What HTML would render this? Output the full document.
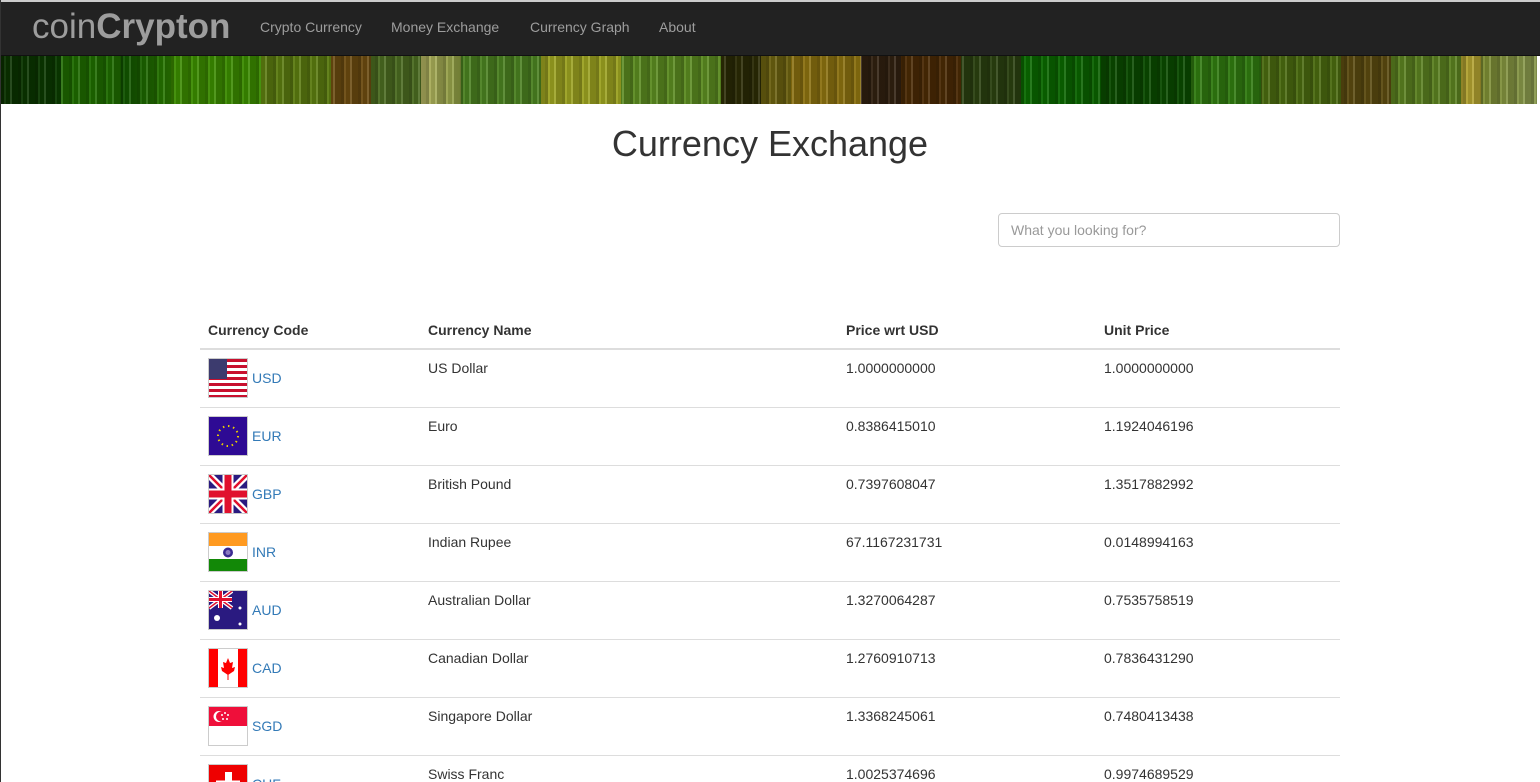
<!DOCTYPE html>
<html><head><meta charset="utf-8"><style>
*{box-sizing:border-box}
html,body{margin:0;width:1540px;height:782px;overflow:hidden}
body{position:relative;background:#fff;font-family:"Liberation Sans",sans-serif;font-size:14px;color:#333}
.lb{position:absolute;left:0;top:0;width:1px;height:782px;background:#333}
.nav{position:absolute;left:0;top:0;width:1540px;height:56px;background:#222;border-top:2px solid #ccc;border-bottom:1px solid #111}
.brand{position:absolute;left:32px;top:5px;font-size:35px;color:#9d9d9d}
.brand b{font-weight:bold}
.nav a{position:absolute;top:17px;color:#9d9d9d;font-size:14px;text-decoration:none}
.banner{position:absolute;left:1px;top:56px;width:1536px;height:48px;background:linear-gradient(90deg,#0a3000 0,#0a3a00 60px,#1e6a00 60px,#1e6a00 120px,#0f5000 120px,#2a7a00 170px,#3a8a00 170px,#3a8a00 260px,#5a7a10 260px,#5a7a10 330px,#6a4a10 330px,#6a4a10 370px,#4a6a20 370px,#4a6a20 420px,#b0b060 420px,#8a9a40 460px,#4a8020 460px,#4a8020 540px,#9aa020 540px,#9aa020 620px,#5a8a20 620px,#5a8a20 720px,#2a2a05 720px,#2a2a05 760px,#6a6010 760px,#6a6010 790px,#8a7010 790px,#8a7010 860px,#302010 860px,#302010 900px,#4a2a05 900px,#4a2a05 960px,#2a4010 960px,#2a4010 1020px,#0a6a00 1020px,#0a6000 1100px,#0a4a00 1100px,#0a4a00 1190px,#307a10 1190px,#307a10 1260px,#4a6a10 1260px,#4a6a10 1340px,#5a4a10 1340px,#5a4a10 1390px,#5a8020 1390px,#5a8020 1460px,#b0a030 1460px,#b0a030 1480px,#7a8a30 1480px,#8a9a50 1536px)}
.banner:after{content:"";position:absolute;inset:0;background:repeating-linear-gradient(90deg,rgba(0,0,0,.25) 0,rgba(0,0,0,.25) 3px,rgba(255,255,255,.06) 3px,rgba(255,255,255,.06) 5px,rgba(0,0,0,.1) 5px,rgba(0,0,0,.1) 9px,rgba(255,255,255,.12) 9px,rgba(255,255,255,.12) 11px,rgba(0,0,0,.18) 11px,rgba(0,0,0,.18) 17px)}
h1{position:absolute;left:0;width:1540px;top:123px;margin:0;text-align:center;font-weight:normal;font-size:36px;color:#333}
.search{position:absolute;left:998px;top:213px;width:342px;height:34px;border:1px solid #ccc;border-radius:4px;padding:8px 12px;color:#999;font-size:14px}
table{position:absolute;left:200px;top:306px;width:1140px;border-collapse:collapse}
th{text-align:left;padding:8px;padding-bottom:10px;height:43px;vertical-align:bottom;border-bottom:2px solid #ddd;font-weight:bold}
td{padding:8px;vertical-align:top;border-bottom:1px solid #ddd;height:58px;line-height:20px}
.f{display:inline-block;width:40px;height:40px;border:1px solid #ccc;vertical-align:middle;overflow:hidden}
.f svg{display:block}
.c{color:#337ab7;vertical-align:middle;margin-left:4px}
</style></head><body>
<div class="nav"><div class="brand">coin<b>Crypton</b></div>
<a style="left:260px">Crypto Currency</a><a style="left:391px">Money Exchange</a><a style="left:530px">Currency Graph</a><a style="left:659px">About</a></div>
<div class="banner"></div>
<div class="lb"></div>
<h1>Currency Exchange</h1>
<div class="search">What you looking for?</div>
<table>
<colgroup><col style="width:220px"><col style="width:418px"><col style="width:258px"><col></colgroup>
<tr><th>Currency Code</th><th>Currency Name</th><th>Price wrt USD</th><th>Unit Price</th></tr>
<tr><td><span class="f"><svg width="38" height="38"><rect width="38" height="38" fill="#fff"/><g fill="#c8102e"><rect y="0" width="38" height="3"/><rect y="6" width="38" height="3"/><rect y="12" width="38" height="3"/><rect y="18" width="38" height="3"/><rect y="24" width="38" height="3"/><rect y="30" width="38" height="3"/><rect y="36" width="38" height="2"/></g><rect width="18" height="20" fill="#3c3b6e"/></svg></span><span class="c">USD</span></td><td>US Dollar</td><td>1.0000000000</td><td>1.0000000000</td></tr>
<tr><td><span class="f"><svg width="38" height="38"><rect width="38" height="38" fill="#2e0a94"/><circle cx="19" cy="19" r="10" fill="none" stroke="#e8d000" stroke-width="2" stroke-dasharray="1.5 3.7"/></svg></span><span class="c">EUR</span></td><td>Euro</td><td>0.8386415010</td><td>1.1924046196</td></tr>
<tr><td><span class="f"><svg width="38" height="38"><rect width="38" height="38" fill="#2a1a80"/><path d="M0 0L38 38M38 0L0 38" stroke="#fff" stroke-width="7"/><path d="M0 0L38 38M38 0L0 38" stroke="#e0102e" stroke-width="2.5"/><path d="M19 0V38M0 19H38" stroke="#fff" stroke-width="11"/><path d="M19 0V38M0 19H38" stroke="#e0102e" stroke-width="7"/></svg></span><span class="c">GBP</span></td><td>British Pound</td><td>0.7397608047</td><td>1.3517882992</td></tr>
<tr><td><span class="f"><svg width="38" height="38"><rect width="38" height="13" fill="#ff9a20"/><rect y="13" width="38" height="13" fill="#fff"/><rect y="26" width="38" height="12" fill="#128807"/><circle cx="19" cy="19.5" r="5" fill="#3a2a90"/><circle cx="19" cy="19.5" r="2.5" fill="#8a7ac0"/></svg></span><span class="c">INR</span></td><td>Indian Rupee</td><td>67.1167231731</td><td>0.0148994163</td></tr>
<tr><td><span class="f"><svg width="38" height="38"><rect width="38" height="38" fill="#2a1a80"/><path d="M0 0L23 17M23 0L0 17" stroke="#fff" stroke-width="4"/><path d="M0 0L23 17M23 0L0 17" stroke="#e0102e" stroke-width="1.5"/><path d="M11.5 0V17M0 8.5H23" stroke="#fff" stroke-width="5"/><path d="M11.5 0V17M0 8.5H23" stroke="#e0102e" stroke-width="3"/><circle cx="8" cy="27" r="3" fill="#fff"/><circle cx="31" cy="17" r="1.5" fill="#fff"/><circle cx="31" cy="33" r="1.5" fill="#fff"/></svg></span><span class="c">AUD</span></td><td>Australian Dollar</td><td>1.3270064287</td><td>0.7535758519</td></tr>
<tr><td><span class="f"><svg width="38" height="38"><rect width="38" height="38" fill="#fff"/><rect width="9" height="38" fill="#f00"/><rect x="29" width="9" height="38" fill="#f00"/><path d="M19 9L21 14L24 13L23 19L26 18L25 22L19 26L13 22L12 18L15 19L14 13L17 14Z" fill="#f00"/><rect x="18.5" y="25" width="1" height="6" fill="#f00"/></svg></span><span class="c">CAD</span></td><td>Canadian Dollar</td><td>1.2760910713</td><td>0.7836431290</td></tr>
<tr><td><span class="f"><svg width="38" height="38"><rect width="38" height="19" fill="#ef0f3a"/><rect y="19" width="38" height="19" fill="#fff"/><circle cx="10" cy="9.5" r="5.5" fill="#fff"/><circle cx="12" cy="9.5" r="5" fill="#ef0f3a"/><g fill="#fff"><circle cx="16" cy="6" r="1"/><circle cx="19" cy="8" r="1"/><circle cx="18" cy="12" r="1"/><circle cx="14" cy="12" r="1"/><circle cx="13" cy="8" r="1"/></g></svg></span><span class="c">SGD</span></td><td>Singapore Dollar</td><td>1.3368245061</td><td>0.7480413438</td></tr>
<tr><td><span class="f"><svg width="38" height="38"><rect width="38" height="38" fill="#e00"/><rect x="16" y="7" width="7" height="24" fill="#fff"/><rect x="7" y="15.5" width="24" height="7" fill="#fff"/></svg></span><span class="c">CHF</span></td><td>Swiss Franc</td><td>1.0025374696</td><td>0.9974689529</td></tr>
</table>
</body></html>
